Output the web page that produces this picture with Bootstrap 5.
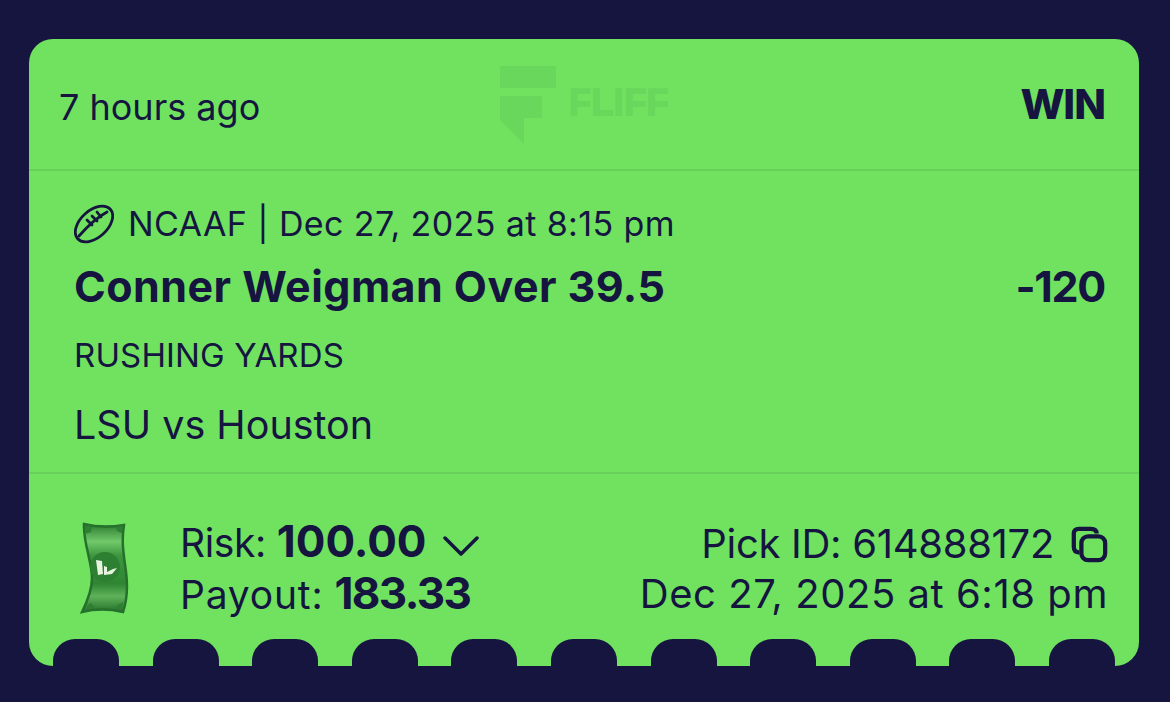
<!DOCTYPE html>
<html lang="en">
<head>
    <meta charset="UTF-8">
    <meta name="viewport" content="width=device-width, initial-scale=1.0">
    <title>Fliff Pick</title>
    <link href="https://cdn.jsdelivr.net/npm/bootstrap@5.3.0/dist/css/bootstrap.min.css" rel="stylesheet">
    <style>
        html, body { height: 100%; }
        body { background: #151540; color: #151540; font-family: "Inter", "Liberation Sans", sans-serif; overflow: hidden; }
        .page-wrap { padding: 39px 31px 36px 29px; }
        .pick-ticket { background: #70e260; height: 627px; border-radius: 24px; overflow: hidden; border: 0; color: #151540; }
        .ticket-head { height: 132px; padding: 0 34px 0 30px; border-bottom: 2px solid #66d05a; position: relative; }
        .time-ago { font-size: 36px; line-height: 1; padding-top: 5px; }
        .win-label { font-size: 41.500px; font-weight: 800; line-height: 1; letter-spacing: -1px; padding-top: 1px; }
        .ghost-logo { position: absolute; left: 471px; top: 27px; display: flex; align-items: center; gap: 13px; }
        .ghost-text { font-family: "Liberation Sans", sans-serif; font-size: 36px; font-weight: 700; color: #68d75b; line-height: 1; letter-spacing: 0.4px; margin-top: -4px; -webkit-text-stroke: 1.5px #68d75b; }
        .ticket-body { height: 303px; padding: 33px 34px 0 45px; border-bottom: 2px solid #66d05a; }
        .event-line { font-size: 34px; line-height: 38px; letter-spacing: 0.4px; gap: 14px; }
        .pick-line { font-size: 43px; font-weight: 700; line-height: 50px; letter-spacing: 0.45px; margin-top: 17px; }
        .pick-odds { letter-spacing: -1.3px; }
        .market-line { font-size: 33px; line-height: 40px; letter-spacing: 0.15px; margin-top: 24px; }
        .teams-line { font-size: 39.5px; line-height: 46px; margin-top: 27px; }
        .ticket-foot { padding: 43px 31px 0 51px; }
        .bill-art { margin: 5px 50px 0 0; }
        .foot-row { height: 52px; line-height: 52px; font-size: 39px; white-space: nowrap; }
        .foot-row strong { font-size: 44px; line-height: 1; font-weight: 700; }
        .risk-label { letter-spacing: -0.4px; }
        .payout-label { letter-spacing: 0.8px; }
        .payout-val { letter-spacing: -1.6px; }
        .foot-chevron { margin-left: 16px; }
        .foot-right { font-size: 40px; line-height: 50px; text-align: right; margin-top: 2px; }
        .pick-id { letter-spacing: -0.3px; }
        .placed-at { letter-spacing: 0.55px; }
        .ticket-notches { position: absolute; left: 24px; right: 24px; bottom: 0; }
        .notch-cut { width: 66px; height: 27px; background: #151540; border-radius: 22px 22px 0 0; }
    </style>
</head>
<body>
    <div class="page-wrap">
        <div class="pick-ticket card position-relative">
            <!-- Top row -->
            <div class="ticket-head d-flex align-items-center justify-content-between">
                <span class="time-ago">7 hours ago</span>
                <div class="ghost-logo">
                    <svg width="56" height="78" viewBox="0 0 56 78"><path fill="#68d75b" d="M0 0h56v22H0zM0 30h42v22H24v26L0 54z"/></svg>
                    <span class="ghost-text">FLIFF</span>
                </div>
                <span class="win-label">WIN</span>
            </div>

            <!-- Pick details -->
            <div class="ticket-body">
                <div class="event-line d-flex align-items-center">
                    <svg width="40" height="40" viewBox="0 0 40 40" fill="none" stroke="#151540" stroke-width="2.800" stroke-linecap="round" class="flex-shrink-0">
                        <ellipse cx="20" cy="20" rx="22" ry="13.500" transform="rotate(-42 20 20)"/>
                        <path d="M5 32C12 24 22 14 33 8M13 16l5 5M18 12l5 5M23 8l4 5"/>
                    </svg>
                    <span>NCAAF | Dec 27, 2025 at 8:15 pm</span>
                </div>
                <div class="pick-line d-flex justify-content-between">
                    <span>Conner Weigman Over 39.5</span>
                    <span class="pick-odds">-120</span>
                </div>
                <div class="market-line">RUSHING YARDS</div>
                <div class="teams-line">LSU vs Houston</div>
            </div>

            <!-- Bottom row -->
            <div class="ticket-foot d-flex justify-content-between">
                <div class="d-flex">
                    <svg width="50" height="92" viewBox="0 0 50 92" class="flex-shrink-0 bill-art">
                        <defs>
                            <linearGradient id="billFill" x1="0" y1="0" x2="0" y2="1">
                                <stop offset="0" stop-color="#2a7a2f"/><stop offset=".2" stop-color="#72c96b"/><stop offset=".36" stop-color="#3d963f"/>
                                <stop offset=".68" stop-color="#2f8533"/><stop offset=".82" stop-color="#5fb258"/><stop offset="1" stop-color="#26702b"/>
                            </linearGradient>
                        </defs>
                        <path fill="url(#billFill)" stroke="#25702a" stroke-width="2.500" d="M4 2C16 5 32 5 44 3 41 20 44 34 46 50 48 65 47 78 43 90 30 87 14 87 2 90 8 78 12 68 12 56 12 40 3 20 4 2z"/>
                        <circle cx="25" cy="45" r="15" fill="#2d7f31"/>
                        <path fill="#e6f4df" d="M16 38l6 1 1 13-5 1zM24 44l3 1v5l6-3 4-1-5 6-8 1z"/>
                        <path fill="#2d7f31" d="M5 4l7 1-1 5-6 2zM36 5l7-1-1 7-5-2zM5 87l5-6 3 2 1 3zM42 88l1-8-5 3-3 3z"/>
                    </svg>
                    <div>
                        <div class="foot-row"><span class="risk-label">Risk:</span> <strong>100.00</strong><svg width="36" height="22" viewBox="0 0 36 22" class="foot-chevron" fill="none" stroke="#151540" stroke-width="3.500" stroke-linecap="round" stroke-linejoin="round"><path d="M2 3l16 16L34 3"/></svg></div>
                        <div class="foot-row"><span class="payout-label">Payout:</span> <strong class="payout-val">183.33</strong></div>
                    </div>
                </div>
                <div class="foot-right">
                    <div class="d-flex align-items-center justify-content-end gap-3">
                        <span class="pick-id">Pick ID: 614888172</span>
                        <svg width="38" height="38" viewBox="0 0 40 40" fill="none" stroke="#151540" stroke-width="4.500" stroke-linejoin="round"><path d="M10 29c-4 0-6-2-6-6V9c0-3 2-5 5-5h13c4 0 6 2 6 5"/><rect x="12" y="12" width="25" height="25" rx="7"/></svg>
                    </div>
                    <div class="placed-at">Dec 27, 2025 at 6:18 pm</div>
                </div>
            </div>

            <!-- Ticket edge cut-outs -->
            <div class="ticket-notches d-flex justify-content-between">
                <div class="notch-cut"></div><div class="notch-cut"></div><div class="notch-cut"></div><div class="notch-cut"></div><div class="notch-cut"></div><div class="notch-cut"></div><div class="notch-cut"></div><div class="notch-cut"></div><div class="notch-cut"></div><div class="notch-cut"></div><div class="notch-cut"></div>
            </div>
        </div>
    </div>
    <script src="https://cdn.jsdelivr.net/npm/bootstrap@5.3.0/dist/js/bootstrap.bundle.min.js"></script>
</body>
</html>
